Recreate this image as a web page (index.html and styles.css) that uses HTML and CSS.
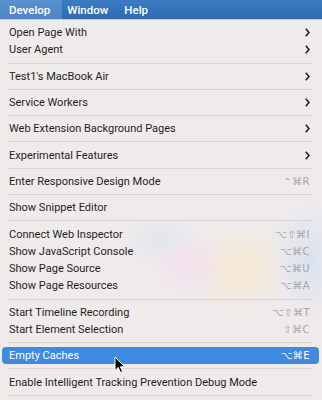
FILE: index.html
```html
<!DOCTYPE html>
<html>
<head>
<meta charset="utf-8">
<link rel="stylesheet" href="styles.css">
</head>
<body>
<div class="screen">
  <div class="menubar">
    <span class="mb-item active">Develop</span>
    <span class="mb-item">Window</span>
    <span class="mb-item">Help</span>
  </div>
  <div class="menu">
    <div class="row"><span>Open Page With</span><svg class="chev" viewBox="0 0 5 9"><polyline points="0.8,0.8 4,4.5 0.8,8.2"/></svg></div>
    <div class="row"><span>User Agent</span><svg class="chev" viewBox="0 0 5 9"><polyline points="0.8,0.8 4,4.5 0.8,8.2"/></svg></div>
    <div class="sep"></div>
    <div class="row"><span>Test1's MacBook Air</span><svg class="chev" viewBox="0 0 5 9"><polyline points="0.8,0.8 4,4.5 0.8,8.2"/></svg></div>
    <div class="sep"></div>
    <div class="row"><span>Service Workers</span><svg class="chev" viewBox="0 0 5 9"><polyline points="0.8,0.8 4,4.5 0.8,8.2"/></svg></div>
    <div class="sep"></div>
    <div class="row"><span>Web Extension Background Pages</span><svg class="chev" viewBox="0 0 5 9"><polyline points="0.8,0.8 4,4.5 0.8,8.2"/></svg></div>
    <div class="sep"></div>
    <div class="row"><span>Experimental Features</span><svg class="chev" viewBox="0 0 5 9"><polyline points="0.8,0.8 4,4.5 0.8,8.2"/></svg></div>
    <div class="sep"></div>
    <div class="row"><span>Enter Responsive Design Mode</span><span class="key">⌃⌘R</span></div>
    <div class="sep"></div>
    <div class="row"><span>Show Snippet Editor</span></div>
    <div class="sep"></div>
    <div class="row"><span>Connect Web Inspector</span><span class="key">⌥⇧⌘I</span></div>
    <div class="row"><span>Show JavaScript Console</span><span class="key">⌥⌘C</span></div>
    <div class="row"><span>Show Page Source</span><span class="key">⌥⌘U</span></div>
    <div class="row"><span>Show Page Resources</span><span class="key">⌥⌘A</span></div>
    <div class="sep"></div>
    <div class="row"><span>Start Timeline Recording</span><span class="key">⌥⇧⌘T</span></div>
    <div class="row"><span>Start Element Selection</span><span class="key">⇧⌘C</span></div>
    <div class="sep"></div>
    <div class="row hl"><span>Empty Caches</span><span class="key">⌥⌘E</span>
      <svg class="cursor" viewBox="0 0 12 18"><path d="M1 1 L1 14.5 L4.2 11.5 L6.5 16.5 L8.6 15.6 L6.4 10.8 L10.8 10.8 Z" fill="#000" stroke="#fff" stroke-width="1"/></svg>
    </div>
    <div class="sep"></div>
    <div class="row"><span>Enable Intelligent Tracking Prevention Debug Mode</span></div>
    <div class="sep"></div>
  </div>
</div>
</body>
</html>
```
FILE: styles.css
```css
html, body {
  margin: 0;
  padding: 0;
}
body {
  width: 322px;
  height: 400px;
  overflow: hidden;
  font-family: Roboto, "Liberation Sans", sans-serif;
}
.screen {
  width: 322px;
  height: 400px;
  position: relative;
  overflow: hidden;
  background:
    radial-gradient(ellipse 40px 35px at 190px 265px, rgba(246, 214, 238, 0.55), rgba(246, 214, 238, 0) 100%),
    radial-gradient(ellipse 50px 45px at 240px 270px, rgba(250, 232, 200, 0.7), rgba(250, 232, 200, 0) 100%),
    radial-gradient(ellipse 45px 60px at 310px 260px, rgba(205, 220, 240, 0.6), rgba(205, 220, 240, 0) 100%),
    radial-gradient(ellipse 40px 30px at 160px 240px, rgba(215, 225, 240, 0.5), rgba(215, 225, 240, 0) 100%),
    #efebeb;
}
.menubar {
  height: 20px;
  display: flex;
  align-items: stretch;
  background: linear-gradient(#3a7bc2, #2d6cb1);
  border-bottom: 1px solid #b9cde6;
  box-sizing: border-box;
}
.mb-item {
  display: flex;
  align-items: center;
  padding: 0 8px;
  color: #fff;
  font-size: 11.5px;
  font-weight: 500;
}
.mb-item.active {
  background: linear-gradient(#5a90cf, #4e86c7);
  padding: 0 12px 0 9px;
}
.mb-item.active + .mb-item {
  padding-left: 5px;
}
.menu {
  padding-top: 4px;
}
.row {
  position: relative;
  height: 17.3px;
  display: flex;
  align-items: center;
  justify-content: space-between;
  padding: 0 12px 0 9px;
  font-size: 11px;
  color: #1f1f1f;
}
.key {
  color: #a8a5a6;
  font-family: "DejaVu Sans", sans-serif;
  font-size: 10px;
  letter-spacing: 0.5px;
}
.chev {
  width: 5px;
  height: 9px;
  fill: none;
  stroke: #222;
  stroke-width: 1.6;
}
.sep {
  height: 9px;
  display: flex;
  align-items: center;
  padding: 0 10px 0 8px;
}
.sep::before {
  content: "";
  flex: 1;
  height: 1px;
  background: #d9d5d6;
}
.row.hl {
  background: #3f8ae2;
  color: #fff;
  border-radius: 4px;
  margin: 0 3px 0 2px;
  padding: 0 9px 0 7px;
}
.row.hl .key {
  color: #fff;
}
.cursor {
  position: absolute;
  left: 112px;
  top: 9px;
  width: 12px;
  height: 18px;
  z-index: 2;
}
```
